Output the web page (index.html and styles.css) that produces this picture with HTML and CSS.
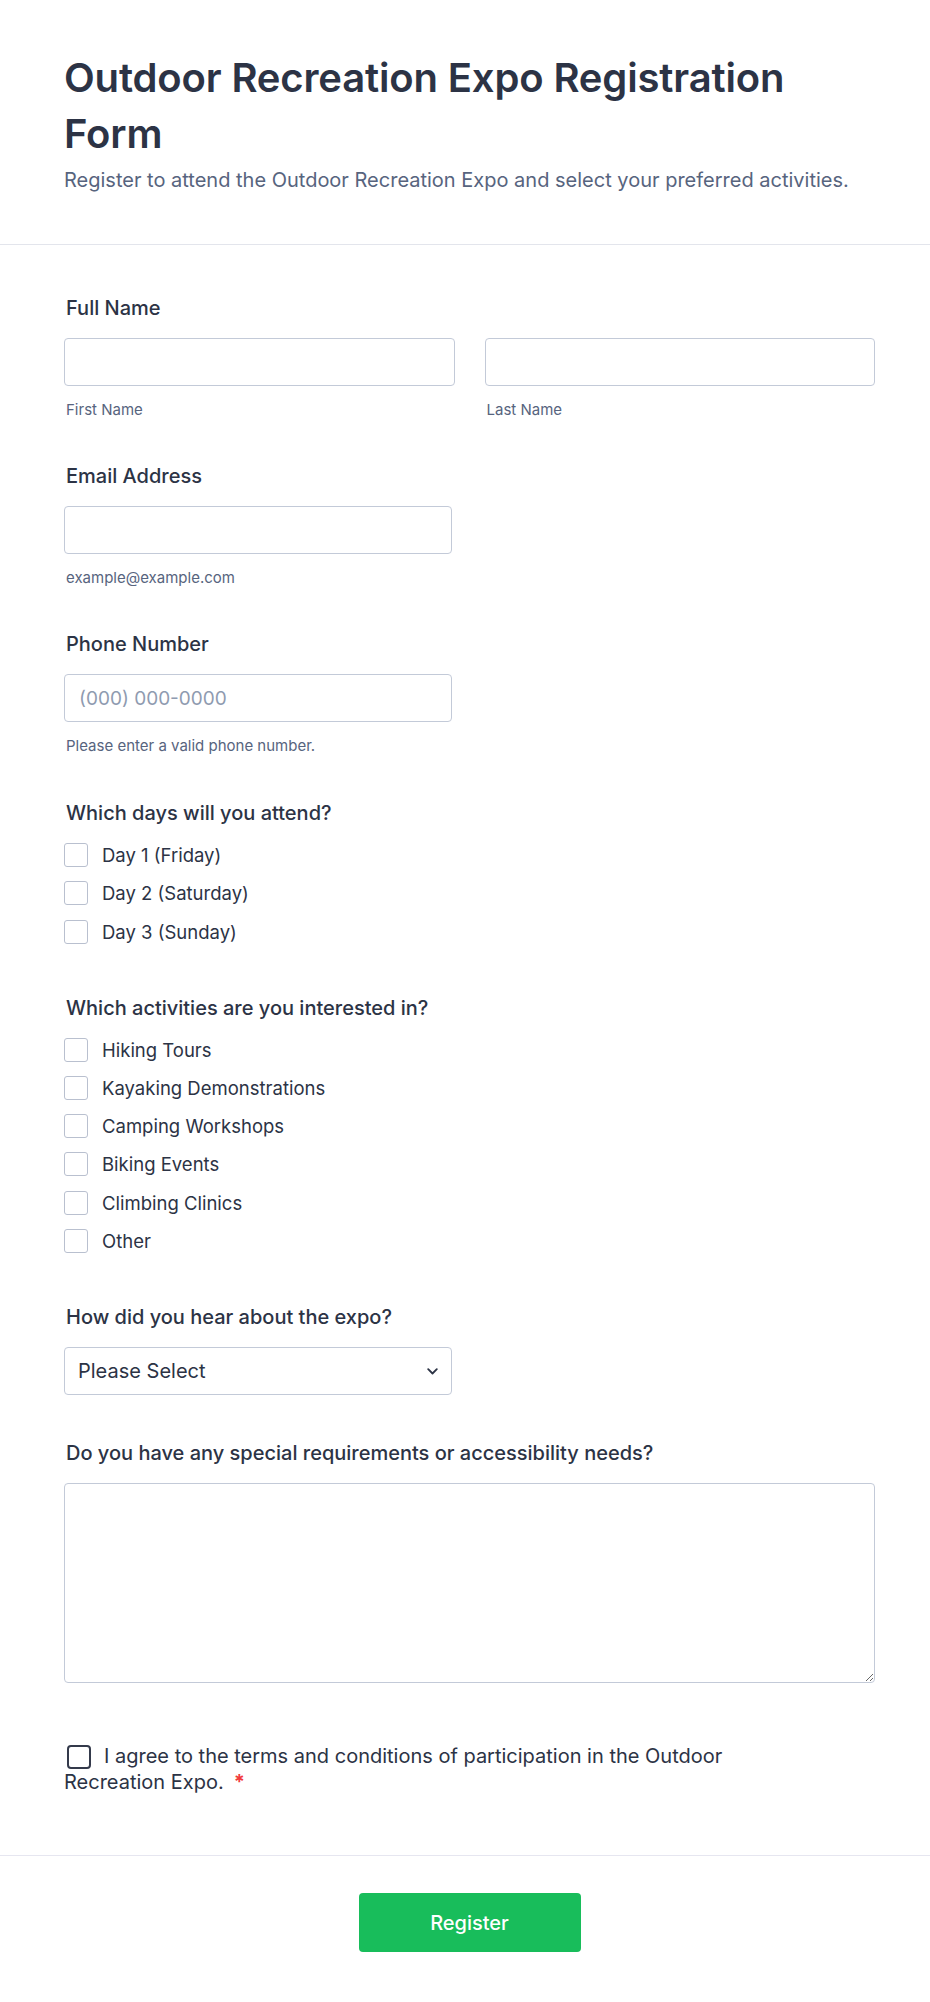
FILE: index.html
```html
<!DOCTYPE html>
<html lang="en">
<head>
<meta charset="utf-8">
<title>Outdoor Recreation Expo Registration Form</title>
<link rel="stylesheet" href="styles.css">
</head>
<body>
<header class="form-header">
  <h1 class="form-title">Outdoor Recreation Expo Registration Form</h1>
  <p class="form-subtitle">Register to attend the Outdoor Recreation Expo and select your preferred activities.</p>
</header>
<main class="form-body">
  <div class="field">
    <label class="field-label">Full Name</label>
    <div class="name-row">
      <div class="name-col">
        <input class="text-input" type="text">
        <span class="sublabel">First Name</span>
      </div>
      <div class="name-col">
        <input class="text-input" type="text">
        <span class="sublabel">Last Name</span>
      </div>
    </div>
  </div>

  <div class="field">
    <label class="field-label">Email Address</label>
    <div class="half">
      <input class="text-input" type="email">
      <span class="sublabel">example@example.com</span>
    </div>
  </div>

  <div class="field field-phone">
    <label class="field-label">Phone Number</label>
    <div class="half">
      <input class="text-input" type="tel" placeholder="(000) 000-0000">
      <span class="sublabel">Please enter a valid phone number.</span>
    </div>
  </div>

  <div class="field">
    <label class="field-label">Which days will you attend?</label>
    <div class="option-list">
      <label class="option"><input class="checkbox" type="checkbox"><span>Day 1 (Friday)</span></label>
      <label class="option"><input class="checkbox" type="checkbox"><span>Day 2 (Saturday)</span></label>
      <label class="option"><input class="checkbox" type="checkbox"><span>Day 3 (Sunday)</span></label>
    </div>
  </div>

  <div class="field">
    <label class="field-label">Which activities are you interested in?</label>
    <div class="option-list">
      <label class="option"><input class="checkbox" type="checkbox"><span>Hiking Tours</span></label>
      <label class="option"><input class="checkbox" type="checkbox"><span>Kayaking Demonstrations</span></label>
      <label class="option"><input class="checkbox" type="checkbox"><span>Camping Workshops</span></label>
      <label class="option"><input class="checkbox" type="checkbox"><span>Biking Events</span></label>
      <label class="option"><input class="checkbox" type="checkbox"><span>Climbing Clinics</span></label>
      <label class="option"><input class="checkbox" type="checkbox"><span>Other</span></label>
    </div>
  </div>

  <div class="field field-select">
    <label class="field-label">How did you hear about the expo?</label>
    <div class="half select-wrap">
      <select class="select-input">
        <option>Please Select</option>
      </select>
      <svg class="chevron" width="11" height="7" viewBox="0 0 11 7" aria-hidden="true"><path d="M1.2 1.2 L5.5 5.5 L9.8 1.2" fill="none" stroke="#2c3345" stroke-width="1.8" stroke-linecap="round" stroke-linejoin="round"/></svg>
    </div>
  </div>

  <div class="field">
    <label class="field-label">Do you have any special requirements or accessibility needs?</label>
    <textarea class="textarea-input"></textarea>
  </div>

  <div class="terms">
    <label class="terms-label"><span class="terms-box"></span>I agree to the terms and conditions of participation in the Outdoor Recreation Expo.<span class="required">*</span></label>
  </div>
</main>
<footer class="form-footer">
  <button class="submit-btn" type="button">Register</button>
</footer>
</body>
</html>
```
FILE: styles.css
```css
* {
  box-sizing: border-box;
}

body {
  margin: 0;
  background: #ffffff;
  font-family: "Inter", "Noto Sans", sans-serif;
  color: #2c3345;
}

.form-header {
  padding: 50px 55px 50px 64px;
  border-bottom: 1px solid #e3e5ec;
}

.form-title {
  margin: 0;
  max-width: 780px;
  font-size: 40px;
  line-height: 56px;
  font-weight: 600;
  letter-spacing: -0.15px;
  color: #2c3345;
}

.form-subtitle {
  margin: 5px 0 0;
  font-size: 20px;
  line-height: 27px;
  color: #57647e;
}

.form-body {
  padding: 50px 55px 60px 64px;
}

.field {
  margin-bottom: 43px;
}

.field-phone {
  margin-bottom: 44px;
}

.field-select {
  margin-bottom: 45px;
}

.field-label {
  display: block;
  margin-left: 2px;
  margin-bottom: 16px;
  font-size: 20px;
  line-height: 27px;
  font-weight: 500;
  color: #2c3345;
}

.name-row {
  display: grid;
  grid-template-columns: 1fr 1fr;
  column-gap: 30px;
}

.name-col,
.half {
  display: flex;
  flex-direction: column;
}

.half {
  width: 388px;
}

.text-input,
.select-input {
  width: 100%;
  height: 48px;
  margin: 0;
  padding: 0 14px;
  border: 1px solid #c3cad8;
  border-radius: 4px;
  background: #ffffff;
  font-family: inherit;
  font-size: 19px;
  color: #2c3345;
  outline: none;
}

.text-input::placeholder {
  color: #8f9bb0;
}

.sublabel {
  margin-top: 13px;
  margin-left: 2px;
  font-size: 15px;
  line-height: 21px;
  color: #57647e;
}

.option-list {
  display: flex;
  flex-direction: column;
  gap: 14.3px;
  padding-bottom: 8px;
}

.option {
  display: flex;
  align-items: center;
  gap: 14px;
  font-size: 18.5px;
  line-height: 24px;
  color: #2c3345;
}

.checkbox {
  appearance: none;
  -webkit-appearance: none;
  width: 24px;
  height: 24px;
  margin: 0;
  border: 1px solid #b9c0cf;
  border-radius: 3px;
  background: #ffffff;
  flex: none;
}

.select-wrap {
  position: relative;
}

.select-input {
  appearance: none;
  -webkit-appearance: none;
  padding-left: 13px;
  font-size: 20px;
}

.chevron {
  position: absolute;
  right: 14px;
  top: 21px;
}

.textarea-input {
  display: block;
  width: 100%;
  height: 200px;
  margin: 0;
  padding: 12px 14px;
  border: 1px solid #c3cad8;
  border-radius: 4px;
  font-family: inherit;
  font-size: 18px;
  color: #2c3345;
  outline: none;
  resize: vertical;
}

.terms {
  padding-top: 17px;
}

.terms-label {
  display: block;
  max-width: 700px;
  font-size: 20px;
  line-height: 26px;
  color: #2c3345;
}

.terms-box {
  display: inline-block;
  width: 24px;
  height: 24px;
  margin: 0 13px 0 3px;
  border: 2px solid #343a4b;
  border-radius: 4px;
  vertical-align: -6px;
}

.required {
  margin-left: 10px;
  color: #f23a3c;
  font-weight: 700;
}

.form-footer {
  display: flex;
  justify-content: center;
  padding: 37px 55px 50px 64px;
  border-top: 1px solid #e6e6f0;
}

.submit-btn {
  width: 222px;
  height: 59px;
  border: none;
  border-radius: 4px;
  background: #18bd5b;
  color: #ffffff;
  font-family: inherit;
  font-size: 20px;
  font-weight: 500;
}
```
